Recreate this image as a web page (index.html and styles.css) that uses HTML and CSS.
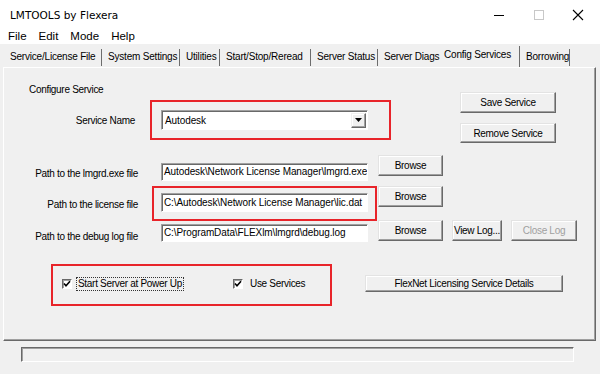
FILE: index.html
```html
<!DOCTYPE html>
<html>
<head>
<meta charset="utf-8">
<link rel="stylesheet" href="styles.css">
</head>
<body>
<div class="window">
  <div class="titlebar">
    <span class="title">LMTOOLS by Flexera</span>
    <div class="controls">
      <svg class="ctl" width="12" height="12" viewBox="0 0 12 12"><path d="M2 6.5h10" stroke="#000" stroke-width="1"/></svg>
      <svg class="ctl" width="12" height="12" viewBox="0 0 12 12"><rect x="2.5" y="1.5" width="9" height="9" fill="none" stroke="#c8c8c8" stroke-width="1"/></svg>
      <svg class="ctl" width="12" height="12" viewBox="0 0 12 12"><path d="M1 1L11 11M11 1L1 11" stroke="#000" stroke-width="1.1"/></svg>
    </div>
  </div>
  <div class="menubar">
    <span>File</span><span>Edit</span><span>Mode</span><span>Help</span>
  </div>
  <div class="tabs">
    <div class="tab t1">Service/License File</div>
    <div class="tab t2">System Settings</div>
    <div class="tab t3">Utilities</div>
    <div class="tab t4">Start/Stop/Reread</div>
    <div class="tab t5">Server Status</div>
    <div class="tab t6">Server Diags</div>
    <div class="tab t7 active">Config Services</div>
    <div class="tab t8">Borrowing</div>
  </div>
  <div class="panel">
    <div class="top">
      <div class="top-left">
        <div class="section-title">Configure Service</div>
        <div class="svc-row">
          <div class="svc-label">Service Name</div>
          <div class="combo">
            <span class="combo-text">Autodesk</span>
            <span class="combo-btn"><svg width="7" height="4" viewBox="0 0 7 4"><path d="M0 0h7L3.5 4z" fill="#000"/></svg></span>
          </div>
        </div>
      </div>
      <div class="top-right">
        <button class="btn save">Save Service</button>
        <button class="btn remove">Remove Service</button>
      </div>
    </div>
    <div class="paths">
      <div class="path-row r1">
        <div class="lbl">Path to the lmgrd.exe file</div>
        <div class="field">Autodesk\Network License Manager\lmgrd.exe</div>
        <button class="btn browse">Browse</button>
      </div>
      <div class="path-row r2">
        <div class="lbl">Path to the license file</div>
        <div class="field">C:\Autodesk\Network License Manager\lic.dat</div>
        <button class="btn browse">Browse</button>
      </div>
      <div class="path-row r3">
        <div class="lbl">Path to the debug log file</div>
        <div class="field">C:\ProgramData\FLEXlm\lmgrd\debug.log</div>
        <button class="btn browse">Browse</button>
        <button class="btn viewlog">View Log...</button>
        <button class="btn closelog" disabled>Close Log</button>
      </div>
    </div>
    <div class="opts">
      <div class="check c1"><span class="box"><svg width="8" height="8" viewBox="0 0 8 8"><path d="M1 3.5L3 5.8L7 1.2" fill="none" stroke="#000" stroke-width="1.6"/></svg></span><span class="check-text focus">Start Server at Power Up</span></div>
      <div class="check c2"><span class="box"><svg width="8" height="8" viewBox="0 0 8 8"><path d="M1 3.5L3 5.8L7 1.2" fill="none" stroke="#000" stroke-width="1.6"/></svg></span><span class="check-text">Use Services</span></div>
      <button class="btn flexnet">FlexNet Licensing Service Details</button>
    </div>
  </div>
  <div class="statusbar">
    <div class="status-field"></div>
  </div>
  <div class="mark m1"></div>
  <div class="mark m2"></div>
  <div class="mark m3"></div>
</div>
</body>
</html>
```
FILE: styles.css
```css
* { box-sizing: border-box; }
html, body { margin: 0; padding: 0; }
body {
  width: 600px;
  height: 374px;
  overflow: hidden;
  background: #f0f0f0;
  font-family: "Liberation Sans", Arial, sans-serif;
  font-size: 10px;
  letter-spacing: -0.3px;
  color: #000;
}
.window {
  position: relative;
  width: 600px;
  height: 374px;
  background: #f0f0f0;
}
.titlebar {
  height: 28px;
  background: #fff;
  display: flex;
  align-items: center;
  justify-content: space-between;
  padding-left: 10px;
  letter-spacing: 0;
}
.title {
  font-family: "DejaVu Sans", sans-serif;
  font-size: 10.5px;
  letter-spacing: 0;
  padding-top: 2px;
}
.controls {
  display: flex;
  align-items: center;
  height: 28px;
  padding-top: 1px;
}
.ctl { margin-right: 28px; }
.ctl:last-child { margin-right: 16px; }
.menubar {
  height: 16px;
  background: #fff;
  display: flex;
  align-items: center;
  padding-left: 8px;
  gap: 12px;
  font-size: 11.5px;
  letter-spacing: 0;
}
.tabs {
  height: 23px;
  display: flex;
  align-items: flex-end;
  padding-left: 4px;
}
.tab {
  height: 17px;
  line-height: 15px;
  padding-left: 6px;
  border-right: 1px solid #6d6d6d;
  white-space: nowrap;
  margin-bottom: 1px;
  letter-spacing: -0.2px;
}
.tab.active {
  height: 21px;
  line-height: 17px;
  margin-bottom: 0;
  padding-left: 5px;
}
.t1 { width: 98px; }
.t2 { width: 78px; }
.t3 { width: 40px; }
.t4 { width: 91px; }
.t5 { width: 67px; }
.t6 { width: 61px; border-right: none; }
.t7 { width: 81px; }
.t8 { width: 50px; }
.panel {
  margin-left: 3px;
  width: 593px;
  height: 274px;
  border-top: 1px solid #fff;
  border-left: 1px solid #fff;
  border-right: 1px solid #696969;
  border-bottom: 1px solid #696969;
  box-shadow: inset -1px -1px #a0a0a0;
}
.top {
  display: flex;
  height: 87px;
}
.top-left { width: 420px; }
.section-title {
  margin: 15px 0 0 25px;
  line-height: 13px;
}
.svc-row {
  display: flex;
  align-items: center;
  margin-top: 14px;
}
.svc-label {
  width: 131px;
  text-align: right;
}
.combo {
  margin-left: 26px;
  width: 207px;
  height: 20px;
  background: #fff;
  border: 1px solid;
  border-color: #a0a0a0 #fff #fff #a0a0a0;
  box-shadow: inset 1px 1px #696969;
  display: flex;
  align-items: center;
  justify-content: space-between;
  padding: 0 1px 0 3px;
  letter-spacing: -0.1px;
}
.combo-btn {
  width: 15px;
  height: 15px;
  background: #f0f0f0;
  border: 1px solid;
  border-color: #f0f0f0 #696969 #696969 #f0f0f0;
  box-shadow: inset -1px -1px #a0a0a0, inset 1px 1px #fff;
  display: flex;
  align-items: center;
  justify-content: center;
}
.top-right {
  margin-left: 36px;
  padding-top: 24px;
  display: flex;
  flex-direction: column;
  gap: 10px;
}
.btn {
  font-family: inherit;
  font-size: 10px;
  letter-spacing: -0.3px;
  color: #000;
  background: #f0f0f0;
  border: 1px solid;
  border-color: #e3e3e3 #696969 #696969 #e3e3e3;
  box-shadow: inset -1px -1px #a0a0a0, inset 1px 1px #fff;
  padding: 0;
  margin: 0;
  white-space: nowrap;
}
.save { width: 96px; height: 21px; }
.remove { width: 96px; height: 20px; }
.paths { display: flex; flex-direction: column; }
.path-row {
  display: flex;
  align-items: flex-start;
}
.r1 { height: 31px; }
.r2 { height: 34px; }
.r3 { height: 22px; }
.lbl {
  width: 134px;
  text-align: right;
  line-height: 13px;
}
.field {
  margin-left: 23px;
  width: 207px;
  height: 18px;
  background: #fff;
  border: 1px solid;
  border-color: #a0a0a0 #fff #fff #a0a0a0;
  box-shadow: inset 1px 1px #696969;
  padding-left: 2px;
  line-height: 16px;
  white-space: nowrap;
  overflow: hidden;
  letter-spacing: -0.1px;
}
.r1 .lbl { margin-top: 12px; }
.r1 .field { margin-top: 8px; }
.r2 .lbl { margin-top: 12px; }
.r2 .field { margin-top: 7px; height: 19px; line-height: 17px; }
.r3 .lbl { margin-top: 10px; }
.r3 .field { margin-top: 4px; }
.browse { margin-left: 10px; width: 65px; height: 21px; }
.viewlog { margin-left: 9px; width: 50px; height: 21px; }
.closelog { margin-left: 9px; width: 66px; height: 21px; color: #a0a0a0; }
.opts {
  display: flex;
  align-items: center;
  margin-top: 33px;
  height: 17px;
}
.check {
  display: flex;
  align-items: center;
}
.c1 { margin-left: 58px; width: 171px; }
.c2 { width: 132px; }
.box {
  width: 10px;
  height: 10px;
  background: #fff;
  border: 1px solid;
  border-color: #696969 #fff #fff #696969;
  box-shadow: 1px 1px #a0a0a0 inset;
  display: flex;
  align-items: center;
  justify-content: center;
  flex: none;
}
.check-text {
  margin-left: 5px;
  line-height: 12px;
  padding: 0 1px;
  white-space: nowrap;
}
.c2 .check-text { margin-left: 6px; }
.focus { outline: 1px dotted #333; }
.flexnet {
  width: 198px;
  height: 17px;
}
.statusbar {
  padding: 6px 0 0 21px;
}
.status-field {
  width: 553px;
  height: 15px;
  border: 1px solid;
  border-color: #696969 #fff #fff #696969;
  box-shadow: inset 1px 1px #a0a0a0;
}
.mark {
  position: absolute;
  border: 2px solid #e8242a;
}
.m1 { left: 150px; top: 100px; width: 241px; height: 40px; }
.m2 { left: 152px; top: 186px; width: 225px; height: 35px; }
.m3 { left: 51px; top: 264px; width: 281px; height: 42px; }
```
